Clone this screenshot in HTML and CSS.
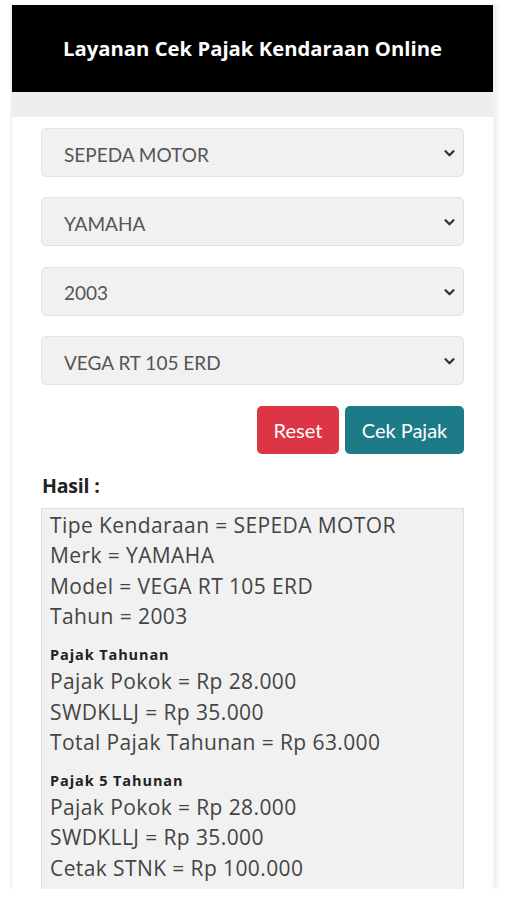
FILE: index.html
```html
<!DOCTYPE html>
<html lang="id">
<head>
<meta charset="utf-8">
<title>Layanan Cek Pajak Kendaraan Online</title>
<link rel="stylesheet" href="styles.css">
</head>
<body>
<div class="page">
  <header class="header">Layanan Cek Pajak Kendaraan Online</header>
  <div class="band"></div>
  <main class="card">
    <div class="select"><span>SEPEDA MOTOR</span><svg class="chev" viewBox="0 0 12 8" width="11" height="7"><path d="M1.5 1.5 6 6l4.5-4.5" fill="none" stroke="#333" stroke-width="2.6" stroke-linecap="round" stroke-linejoin="round"/></svg></div>
    <div class="select"><span>YAMAHA</span><svg class="chev" viewBox="0 0 12 8" width="11" height="7"><path d="M1.5 1.5 6 6l4.5-4.5" fill="none" stroke="#333" stroke-width="2.6" stroke-linecap="round" stroke-linejoin="round"/></svg></div>
    <div class="select"><span>2003</span><svg class="chev" viewBox="0 0 12 8" width="11" height="7"><path d="M1.5 1.5 6 6l4.5-4.5" fill="none" stroke="#333" stroke-width="2.6" stroke-linecap="round" stroke-linejoin="round"/></svg></div>
    <div class="select"><span>VEGA RT 105 ERD</span><svg class="chev" viewBox="0 0 12 8" width="11" height="7"><path d="M1.5 1.5 6 6l4.5-4.5" fill="none" stroke="#333" stroke-width="2.6" stroke-linecap="round" stroke-linejoin="round"/></svg></div>
    <div class="actions">
      <button class="btn btn-reset">Reset</button>
      <button class="btn btn-cek">Cek Pajak</button>
    </div>
    <div class="label">Hasil :</div>
    <div class="result">
      <div class="line">Tipe Kendaraan = SEPEDA MOTOR</div>
      <div class="line">Merk = YAMAHA</div>
      <div class="line">Model = VEGA RT 105 ERD</div>
      <div class="line">Tahun = 2003</div>
      <div class="sub">Pajak Tahunan</div>
      <div class="line">Pajak Pokok = Rp 28.000</div>
      <div class="line">SWDKLLJ = Rp 35.000</div>
      <div class="line">Total Pajak Tahunan = Rp 63.000</div>
      <div class="sub">Pajak 5 Tahunan</div>
      <div class="line">Pajak Pokok = Rp 28.000</div>
      <div class="line">SWDKLLJ = Rp 35.000</div>
      <div class="line">Cetak STNK = Rp 100.000</div>
    </div>
  </main>
</div>
</body>
</html>
```
FILE: styles.css
```css
* { box-sizing: border-box; }
html, body { margin: 0; padding: 0; background: #fff; }
body { font-family: "Open Sans", "Noto Sans", sans-serif; overflow: hidden; }

.page {
  margin: 5px 0 0 10px;
  width: 485px;
  height: 884px;
  padding: 0 2px;
  background: #f2f2f2;
  box-shadow: 3px 0 3px rgba(0, 0, 0, 0.06);
  overflow: hidden;
}

.header {
  height: 87px;
  background: #000;
  color: #fff;
  display: flex;
  align-items: center;
  justify-content: center;
  font-family: "Open Sans", sans-serif;
  font-weight: 700;
  font-size: 20.3px;
  padding-bottom: 2px;
}

.band { height: 25px; background: #eeeeee; }

.card {
  background: #fff;
  padding: 11px 29px 0 29px;
  height: 772px;
}

.select {
  height: 49px;
  margin-bottom: 20.4px;
  background: #f1f1f1;
  border: 1px solid #e2e2e2;
  border-radius: 5px;
  display: flex;
  align-items: center;
  justify-content: space-between;
  padding: 3px 8px 0 22px;
  font-family: Lato, "Open Sans", sans-serif;
  font-size: 19px;
  color: #555;
}
.chev { display: block; margin-top: -1px; }

.actions {
  display: flex;
  justify-content: flex-end;
  gap: 6px;
  margin-top: 1px;
}
.btn {
  height: 48px;
  border: none;
  border-radius: 5px;
  color: #fff;
  font-family: Lato, "Open Sans", sans-serif;
  font-size: 20px;
  padding: 0;
}
.btn-reset { width: 82px; background: #dc3545; }
.btn-cek { width: 119px; background: #1d7b88; }

.label {
  margin-top: 19px;
  font-family: "Open Sans", sans-serif;
  font-weight: 700;
  font-size: 19.5px;
  letter-spacing: -0.2px;
  color: #222;
  line-height: 26px;
  padding-left: 1px;
}

.result {
  margin-top: 9px;
  background: #f1f1f1;
  border: 1px solid #dedede;
  padding: 1px 8px 0;
  height: 400px;
  color: #444;
}
.line {
  font-size: 21px;
  letter-spacing: 0.4px;
  line-height: 30.6px;
}
.sub {
  font-size: 14.5px;
  letter-spacing: 0.9px;
  font-weight: 700;
  color: #222;
  line-height: 17px;
  margin-top: 14px;
  margin-bottom: 3px;
}
```
